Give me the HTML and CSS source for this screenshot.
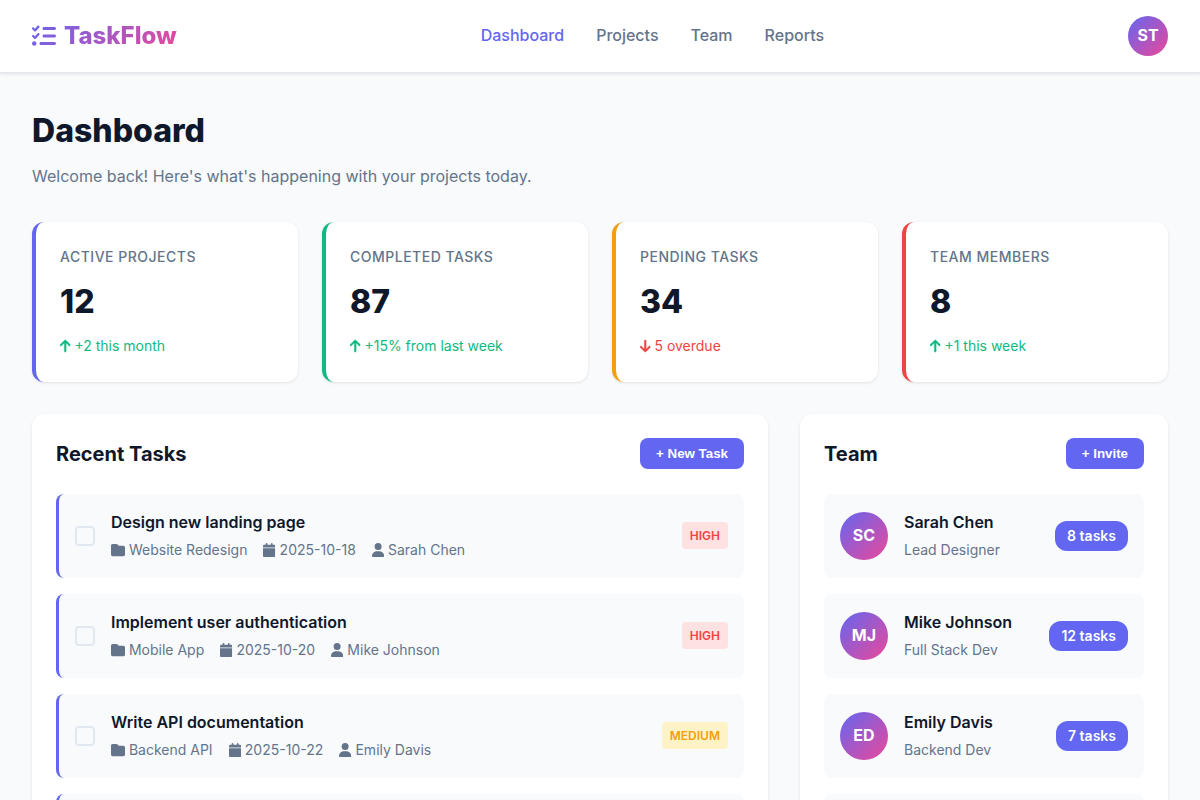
FILE: index.html
```html
<!DOCTYPE html>
<html lang="en">
<head>
<meta charset="utf-8">
<title>TaskFlow</title>
<link rel="stylesheet" href="styles.css">
</head>
<body>
<svg class="sprite" aria-hidden="true">
  <symbol id="folder" viewBox="0 0 512 512"><path d="M64 480H448c35.300 0 64-28.700 64-64V160c0-35.300-28.700-64-64-64H288c-10.100 0-19.600-4.700-25.600-12.800L243.200 57.600C231.100 41.500 212.100 32 192 32H64C28.700 32 0 60.700 0 96V416c0 35.300 28.700 64 64 64z"/></symbol>
  <symbol id="calendar" viewBox="0 0 448 512"><path d="M96 32V64H48C21.500 64 0 85.500 0 112v48H448V112c0-26.500-21.500-48-48-48H352V32c0-17.700-14.300-32-32-32s-32 14.300-32 32V64H160V32c0-17.700-14.300-32-32-32S96 14.300 96 32zM448 192H0V464c0 26.500 21.500 48 48 48H400c26.500 0 48-21.500 48-48V192z"/></symbol>
  <symbol id="user" viewBox="0 0 448 512"><path d="M224 256A128 128 0 1 0 224 0a128 128 0 1 0 0 256zm-45.700 48C79.800 304 0 383.800 0 482.300C0 498.700 13.300 512 29.700 512H418.300c16.400 0 29.700-13.300 29.700-29.700C448 383.800 368.200 304 269.700 304H178.300z"/></symbol>
  <symbol id="arrow-up" viewBox="0 0 384 512"><path d="M214.600 41.400c-12.500-12.500-32.800-12.500-45.300 0l-160 160c-12.500 12.500-12.500 32.800 0 45.300s32.800 12.500 45.300 0L160 141.200V448c0 17.700 14.300 32 32 32s32-14.300 32-32V141.200L329.400 246.600c12.500 12.500 32.800 12.500 45.300 0s12.500-32.800 0-45.300l-160-160z"/></symbol>
  <symbol id="arrow-down" viewBox="0 0 384 512"><path d="M169.400 470.600c12.500 12.500 32.800 12.500 45.300 0l160-160c12.500-12.500 12.500-32.800 0-45.300s-32.800-12.500-45.300 0L224 370.800V64c0-17.700-14.300-32-32-32s-32 14.300-32 32V370.800L54.600 265.400c-12.500-12.500-32.800-12.500-45.300 0s-12.500 32.800 0 45.300l160 160z"/></symbol>
</svg>

<header class="header">
  <div class="logo">
    <svg class="logo-icon" viewBox="0 0 512 512">
      <defs><linearGradient id="brand" gradientUnits="userSpaceOnUse" x1="567" y1="-723" x2="2525" y2="1235"><stop offset="0" stop-color="#6366f1"/><stop offset="1" stop-color="#ec4899"/></linearGradient></defs>
      <path fill="url(#brand)" d="M152.100 38.200c9.900 8.900 10.700 24 1.800 33.900l-72 80c-4.400 4.900-10.600 7.800-17.200 7.900s-12.900-2.400-17.600-7L7 113C-2.300 103.600-2.300 88.400 7 79s24.600-9.400 33.900 0l22.100 22.100 55.100-61.200c8.900-9.900 24-10.700 33.900-1.800zm0 160c9.900 8.900 10.700 24 1.800 33.900l-72 80c-4.400 4.900-10.600 7.800-17.200 7.900s-12.900-2.400-17.600-7L7 273c-9.400-9.400-9.400-24.600 0-33.900s24.600-9.400 33.900 0l22.100 22.100 55.100-61.200c8.900-9.900 24-10.700 33.900-1.800zM224 96c0-17.700 14.300-32 32-32H480c17.700 0 32 14.300 32 32s-14.300 32-32 32H256c-17.700 0-32-14.300-32-32zm0 160c0-17.700 14.300-32 32-32H480c17.700 0 32 14.300 32 32s-14.300 32-32 32H256c-17.700 0-32-14.300-32-32zM160 416c0-17.700 14.300-32 32-32H480c17.700 0 32 14.300 32 32s-14.300 32-32 32H192c-17.700 0-32-14.300-32-32zM48 368a48 48 0 1 1 0 96 48 48 0 1 1 0-96z"/>
    </svg>
    <span>TaskFlow</span>
  </div>
  <nav class="nav">
    <a class="nav-link active">Dashboard</a>
    <a class="nav-link">Projects</a>
    <a class="nav-link">Team</a>
    <a class="nav-link">Reports</a>
  </nav>
  <div class="avatar">ST</div>
</header>

<main class="main">
  <h1 class="page-title">Dashboard</h1>
  <p class="subtitle">Welcome back! Here's what's happening with your projects today.</p>

  <section class="stats">
    <div class="stat">
      <div class="stat-label">Active Projects</div>
      <div class="stat-value">12</div>
      <div class="stat-change"><svg class="icon arrow"><use href="#arrow-up"/></svg> +2 this month</div>
    </div>
    <div class="stat success">
      <div class="stat-label">Completed Tasks</div>
      <div class="stat-value">87</div>
      <div class="stat-change"><svg class="icon arrow"><use href="#arrow-up"/></svg> +15% from last week</div>
    </div>
    <div class="stat warning">
      <div class="stat-label">Pending Tasks</div>
      <div class="stat-value">34</div>
      <div class="stat-change negative"><svg class="icon arrow"><use href="#arrow-down"/></svg> 5 overdue</div>
    </div>
    <div class="stat danger">
      <div class="stat-label">Team Members</div>
      <div class="stat-value">8</div>
      <div class="stat-change"><svg class="icon arrow"><use href="#arrow-up"/></svg> +1 this week</div>
    </div>
  </section>

  <div class="columns">
    <section class="panel">
      <div class="panel-header"><h2 class="panel-title">Recent Tasks</h2><button class="button">+ New Task</button></div>
      <div class="list">
        <div class="task">
          <div class="checkbox"></div>
          <div class="details">
            <div class="name">Design new landing page</div>
            <div class="meta">
              <span><svg class="icon folder"><use href="#folder"/></svg> Website Redesign</span>
              <span><svg class="icon"><use href="#calendar"/></svg> 2025-10-18</span>
              <span><svg class="icon"><use href="#user"/></svg> Sarah Chen</span>
            </div>
          </div>
          <span class="priority high">High</span>
        </div>
        <div class="task">
          <div class="checkbox"></div>
          <div class="details">
            <div class="name">Implement user authentication</div>
            <div class="meta">
              <span><svg class="icon folder"><use href="#folder"/></svg> Mobile App</span>
              <span><svg class="icon"><use href="#calendar"/></svg> 2025-10-20</span>
              <span><svg class="icon"><use href="#user"/></svg> Mike Johnson</span>
            </div>
          </div>
          <span class="priority high">High</span>
        </div>
        <div class="task">
          <div class="checkbox"></div>
          <div class="details">
            <div class="name">Write API documentation</div>
            <div class="meta">
              <span><svg class="icon folder"><use href="#folder"/></svg> Backend API</span>
              <span><svg class="icon"><use href="#calendar"/></svg> 2025-10-22</span>
              <span><svg class="icon"><use href="#user"/></svg> Emily Davis</span>
            </div>
          </div>
          <span class="priority medium">Medium</span>
        </div>
        <div class="task"></div>
      </div>
    </section>

    <section class="panel">
      <div class="panel-header"><h2 class="panel-title">Team</h2><button class="button">+ Invite</button></div>
      <div class="list">
        <div class="member">
          <div class="avatar large">SC</div>
          <div class="details"><div class="name">Sarah Chen</div><div class="meta">Lead Designer</div></div>
          <span class="count">8 tasks</span>
        </div>
        <div class="member">
          <div class="avatar large">MJ</div>
          <div class="details"><div class="name">Mike Johnson</div><div class="meta">Full Stack Dev</div></div>
          <span class="count">12 tasks</span>
        </div>
        <div class="member">
          <div class="avatar large">ED</div>
          <div class="details"><div class="name">Emily Davis</div><div class="meta">Backend Dev</div></div>
          <span class="count">7 tasks</span>
        </div>
        <div class="member"></div>
      </div>
    </section>
  </div>
</main>
</body>
</html>
```
FILE: styles.css
```css
* { box-sizing: border-box; margin: 0; padding: 0; }

html { height: 100%; overflow: hidden; }

body {
  height: 100%;
  overflow: hidden;
  font-family: Inter, "Liberation Sans", sans-serif;
  font-size: 16px;
  line-height: 1.6;
  color: #0f172a;
  background: #f8fafc;
}

.sprite { display: none; }

.header {
  display: flex;
  align-items: center;
  justify-content: space-between;
  padding: 16px 32px;
  background: #fff;
  border-bottom: 1px solid #e2e8f0;
  box-shadow: 0 1px 3px rgba(0, 0, 0, 0.1);
}

.logo {
  display: flex;
  align-items: center;
  gap: 8px;
  font-size: 24px;
  font-weight: 800;
  background: linear-gradient(135deg, #6366f1, #ec4899);
  -webkit-background-clip: text;
  background-clip: text;
  -webkit-text-fill-color: transparent;
}

.logo-icon { width: 24px; height: 24px; }

.nav { display: flex; gap: 32px; }

.nav-link { font-weight: 500; color: #64748b; }

.nav-link.active { color: #6366f1; }

.avatar {
  display: flex;
  align-items: center;
  justify-content: center;
  flex-shrink: 0;
  width: 40px;
  height: 40px;
  border-radius: 50%;
  font-weight: 700;
  color: #fff;
  background: linear-gradient(135deg, #6366f1, #ec4899);
}

.avatar.large { width: 48px; height: 48px; }

.main { padding: 32px; }

.page-title { margin-bottom: 8px; font-size: 32px; font-weight: 800; }

.subtitle { margin-bottom: 32px; color: #64748b; }

.stats {
  display: grid;
  grid-template-columns: repeat(4, 1fr);
  gap: 24px;
  margin-bottom: 32px;
}

.stat {
  padding: 24px;
  background: #fff;
  border-left: 4px solid #6366f1;
  border-radius: 12px;
  box-shadow: 0 1px 3px rgba(0, 0, 0, 0.1);
}

.stat.success { border-left-color: #10b981; }
.stat.warning { border-left-color: #f59e0b; }
.stat.danger { border-left-color: #ef4444; }

.stat-label {
  margin-bottom: 8px;
  font-size: 14px;
  font-weight: 500;
  letter-spacing: 0.5px;
  text-transform: uppercase;
  color: #64748b;
}

.stat-value { margin-bottom: 8px; font-size: 32px; font-weight: 800; }

.stat-change { font-size: 14px; color: #10b981; }
.stat-change.negative { color: #ef4444; }

.icon {
  display: inline-block;
  width: 12.25px;
  height: 14px;
  vertical-align: -1.75px;
  fill: currentColor;
}

.icon.folder { width: 14px; }

.icon.arrow {
  width: 10.5px;
  stroke: currentColor;
  stroke-width: 14px;
}

.columns {
  display: grid;
  grid-template-columns: 2fr 1fr;
  gap: 32px;
}

.panel {
  padding: 24px;
  background: #fff;
  border-radius: 12px;
  box-shadow: 0 1px 3px rgba(0, 0, 0, 0.1);
}

.panel-header {
  display: flex;
  align-items: center;
  justify-content: space-between;
  margin-bottom: 24px;
}

.panel-title { font-size: 20px; font-weight: 700; }

.button {
  padding: 8px 16px;
  border: 0;
  border-radius: 8px;
  font-family: "Liberation Sans", Arial, sans-serif;
  font-size: 13.3333px;
  font-weight: 600;
  color: #fff;
  background: #6366f1;
}

.list { display: flex; flex-direction: column; gap: 16px; }

.task,
.member {
  display: flex;
  align-items: center;
  gap: 16px;
  min-height: 84px;
  padding: 16px;
  border-radius: 8px;
  background: #f8fafc;
}

.task { border-left: 3px solid #6366f1; }

.checkbox {
  flex-shrink: 0;
  width: 20px;
  height: 20px;
  border: 2px solid #e2e8f0;
  border-radius: 4px;
}

.details { flex: 1; }

.name { margin-bottom: 4px; font-weight: 600; }

.meta {
  display: flex;
  gap: 16px;
  font-size: 14px;
  color: #64748b;
}

.priority {
  padding: 4px 8px;
  border-radius: 4px;
  font-size: 12px;
  font-weight: 600;
  text-transform: uppercase;
}

.priority.high { color: #ef4444; background: #fee2e2; }
.priority.medium { color: #f59e0b; background: #fef3c7; }

.count {
  padding: 4px 12px;
  border-radius: 12px;
  font-size: 14px;
  font-weight: 600;
  color: #fff;
  background: #6366f1;
}
```
